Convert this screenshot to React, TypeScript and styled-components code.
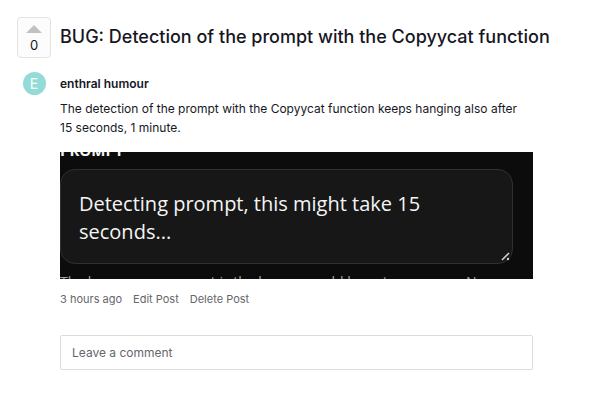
import React from "react";
import styled, { createGlobalStyle } from "styled-components";

const GlobalStyle = createGlobalStyle`
  *, *::before, *::after { box-sizing: border-box; }
  body { margin: 0; background: #fff; color: #17171f; font-family: Inter, "Liberation Sans", sans-serif; }
  h1, h2, p { margin: 0; }
  button, input { font: inherit; }
`;

const Page = styled.main`
  padding: 17px 16px 32px 17px;
`;

const Row = styled.div`
  display: grid;
  grid-template-columns: 34px minmax(0, 1fr);
  column-gap: 9px;
`;

const Header = styled(Row)`
  align-items: start;
`;

const PostRow = styled(Row)`
  margin-top: 14px;
  padding-right: 51px;
`;

const VoteButton = styled.button`
  display: flex;
  flex-direction: column;
  align-items: center;
  gap: 4px;
  padding: 7px 0 4px;
  border: 1px solid #e3e3e3;
  border-radius: 4px;
  background: #fcfcfc;
  color: #17171f;
  font-size: 13px;
  line-height: 16px;
`;

const Title = styled.h1`
  font-size: 18px;
  font-weight: 500;
  line-height: 40px;
`;

const Avatar = styled.div`
  justify-self: center;
  width: 23px;
  height: 23px;
  border-radius: 50%;
  background: #93dbd6;
  color: #fff;
  font-size: 14px;
  line-height: 23px;
  text-align: center;
`;

const Author = styled.h2`
  font-size: 12px;
  font-weight: 600;
  line-height: 24px;
`;

const Message = styled.p`
  margin-top: 3px;
  font-size: 12px;
  line-height: 19px;
`;

const Attachment = styled.figure`
  margin: 15px 0 0;
  overflow: hidden;
  height: 127px;
  background: #0c0c0c;
  color: #f5f5f5;
  font-family: "Open Sans", "Noto Sans", sans-serif;
`;

const PromptLabel = styled.div`
  height: 16px;
  margin-top: -10px;
  margin-bottom: 11px;
  font-size: 15px;
  font-weight: 700;
  line-height: 16px;
`;

const PromptBox = styled.div`
  position: relative;
  height: 95px;
  margin-right: 20px;
  padding: 20px 18px;
  border: 1px solid #303030;
  border-radius: 15px;
  background: #171717;
  font-size: 20px;
  line-height: 28px;
`;

const Grip = styled.svg`
  position: absolute;
  right: 0;
  bottom: 0;
`;

const PromptHint = styled.div`
  margin-top: 8px;
  color: #a5a5a5;
  font-size: 14px;
  line-height: 20px;
  white-space: nowrap;
`;

const Meta = styled.div`
  display: flex;
  gap: 11px;
  margin-top: 12px;
  color: #66666c;
  font-size: 11px;
  line-height: 16px;
`;

const MetaLink = styled.a`
  color: inherit;
  text-decoration: none;
`;

const CommentInput = styled.input`
  display: block;
  width: 100%;
  height: 35px;
  margin-top: 28px;
  padding: 0 11px;
  border: 1px solid #dcdcdc;
  border-radius: 2px;
  background: #fff;
  font-size: 12px;
  &::placeholder { color: #66666c; opacity: 1; }
`;

export default function App() {
  return (
    <>
      <GlobalStyle />
      <Page>
        <Header>
          <VoteButton type="button" aria-label="Upvote, 0 votes">
            <svg width="16" height="8" viewBox="0 0 16 8" aria-hidden="true">
              <path d="M8 0 16 8H0Z" fill="#c1c1c1" />
            </svg>
            <span>0</span>
          </VoteButton>
          <Title>BUG: Detection of the prompt with the Copyycat function</Title>
        </Header>
        <PostRow as="article">
          <Avatar>E</Avatar>
          <div>
            <Author>enthral humour</Author>
            <Message>
              The detection of the prompt with the Copyycat function keeps hanging also after
              <br />
              15 seconds, 1 minute.
            </Message>
            <Attachment>
              <PromptLabel>PROMPT</PromptLabel>
              <PromptBox>
                Detecting prompt, this might take 15 seconds...
                <Grip width="12" height="12" viewBox="0 0 12 12" aria-hidden="true">
                  <path d="M2 9 9 2" fill="none" stroke="#d0d0d0" strokeWidth="1.6" />
                  <circle cx="8" cy="8" r="1.2" fill="#d0d0d0" />
                </Grip>
              </PromptBox>
              <PromptHint>The longer your prompt is the longer would be cut some now. No</PromptHint>
            </Attachment>
            <Meta>
              <span>3 hours ago</span>
              <MetaLink href="#edit">Edit Post</MetaLink>
              <MetaLink href="#delete">Delete Post</MetaLink>
            </Meta>
            <CommentInput type="text" aria-label="Leave a comment" placeholder="Leave a comment" />
          </div>
        </PostRow>
      </Page>
    </>
  );
}
